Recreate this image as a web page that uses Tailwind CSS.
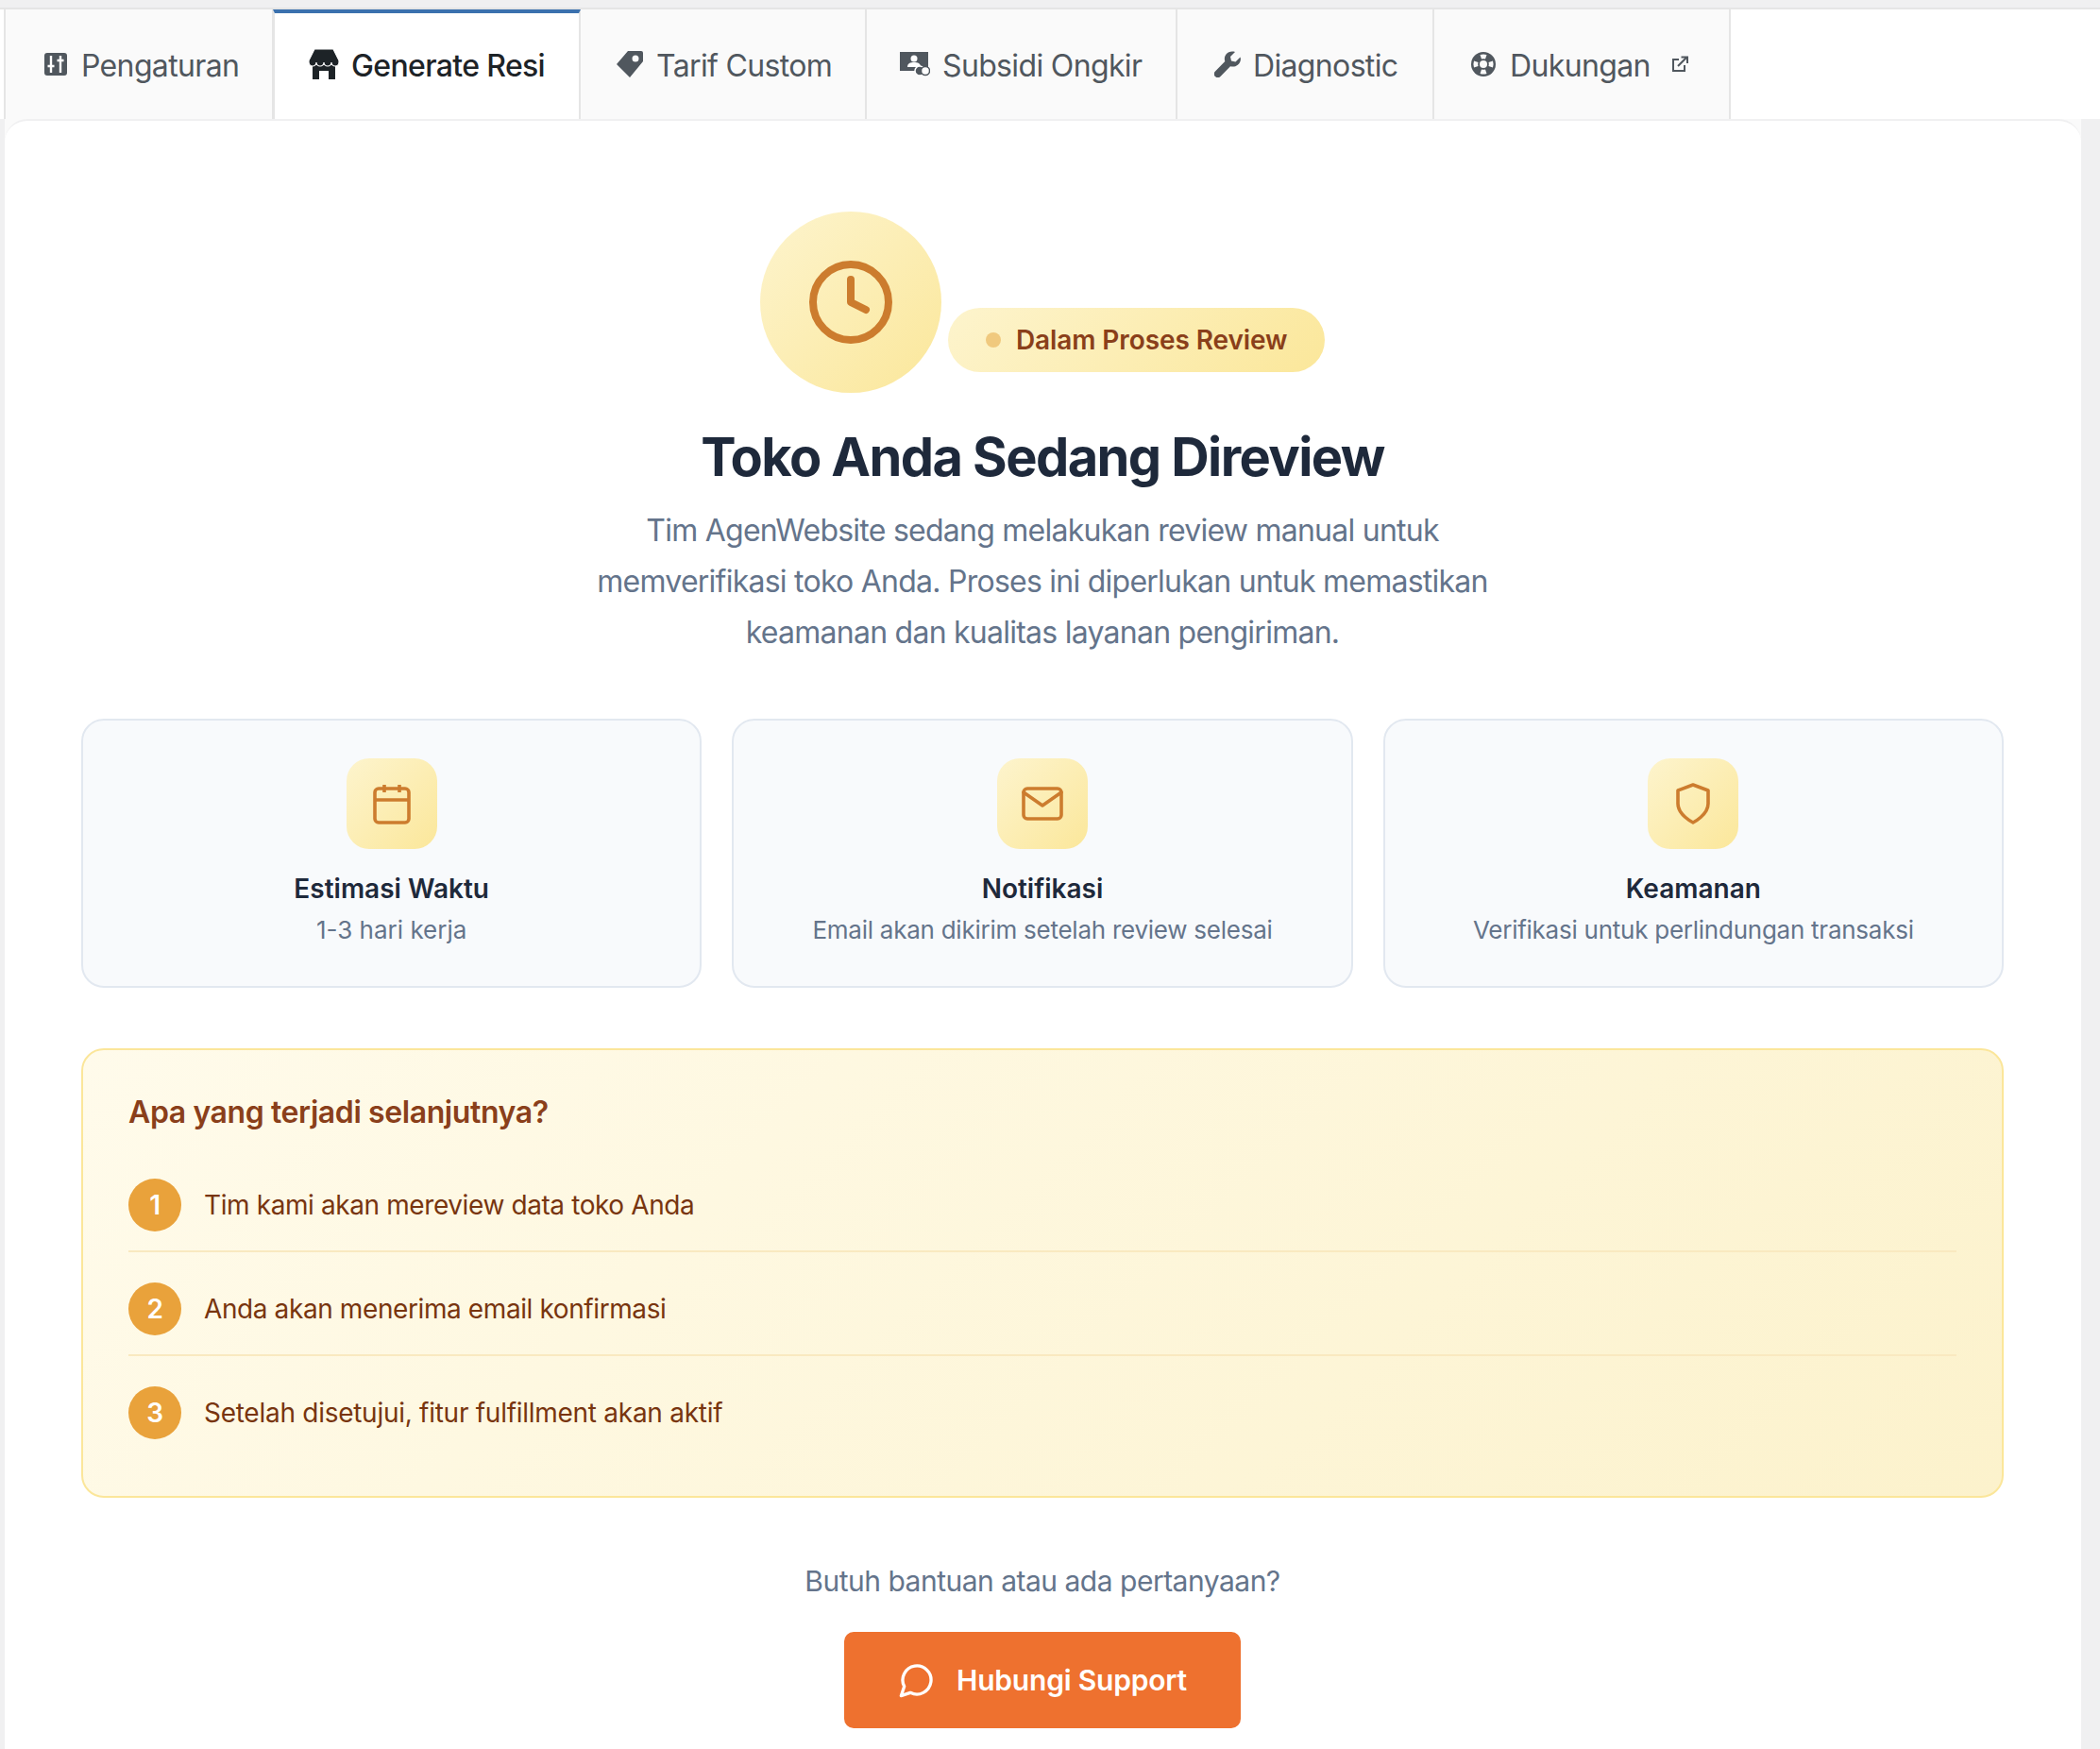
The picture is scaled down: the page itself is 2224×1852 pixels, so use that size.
<!DOCTYPE html>
<html lang="id">
<head>
    <meta charset="UTF-8">
    <title>Generate Resi</title>
    <script src="https://cdn.jsdelivr.net/npm/@tailwindcss/browser@4"></script>
</head>
<body class="bg-[#f0f0f1] font-['Inter',sans-serif] h-[1852px] overflow-hidden pt-2">
    <!-- Tabs -->
    <nav class="h-[118px] flex bg-white border-t-2 border-[#e5e5e5] pl-1 text-[32px] tracking-[-0.65px] text-[#50575e]">
        <a class="w-[286px] pl-[41px] flex items-center gap-[15px] bg-[#fafafa] border-x-2 border-[#e5e5e5]">
            <svg class="w-[24px] h-[24px]" viewBox="0 0 24 24"><rect width="24" height="24" rx="3" fill="#50575e"/><path d="M7 3v18M17 3v18M3.500 14h7M13.500 8h7" stroke="#fff" stroke-width="2.400" fill="none"/></svg>
            <span class="pt-[3px]">Pengaturan</span>
        </a>
        <a class="w-[326px] -ml-[1px] pl-[36px] flex items-center gap-[13px] bg-white border-x-2 border-[#e5e5e5] border-t-4 border-t-[#3b71ae] font-medium text-[#1d2327] pb-1">
            <svg class="w-[32px] h-[32px]" viewBox="0 0 32 32" fill="#1d2327"><path d="M4 17h24v15h-7v-9h-10v9h-7z"/><path stroke="#fff" stroke-width="1.200" d="M6 0h20l6 12v2a4 4 0 0 1-8 0 4 4 0 0 1-8 0 4 4 0 0 1-8 0 4 4 0 0 1-8 0v-2z"/></svg>
            <span class="pt-[3px]">Generate Resi</span>
        </a>
        <a class="w-[303px] pl-[38px] flex items-center gap-[14px] bg-[#fafafa] border-r-2 border-[#e5e5e5]">
            <svg class="w-[28px] h-[28px]" viewBox="0 0 28 28"><path fill-rule="evenodd" fill="#50575e" d="M12 0h14a2 2 0 0 1 2 2v9L14 28 0 14zM20 4.500a3.500 3.500 0 1 0 0 7 3.500 3.500 0 0 0 0-7z"/></svg>
            <span class="pt-[3px]">Tarif Custom</span>
        </a>
        <a class="w-[329px] pl-[35px] flex items-center gap-[13px] bg-[#fafafa] border-r-2 border-[#e5e5e5]">
            <svg class="w-[32px] h-[26px]" viewBox="0 0 32 26"><path fill="#50575e" d="M0 0h30v20h-30z"/><circle cx="15" cy="7" r="3.500" fill="#fff"/><path fill="#fff" d="M8 16c0-4 3-5 7-5s7 1 7 5z"/><circle cx="21" cy="20" r="5" fill="#50575e" stroke="#fff" stroke-width="1.500"/><circle cx="27" cy="20" r="4.500" fill="#fff" stroke="#50575e" stroke-width="1.500"/></svg>
            <span class="pt-[3px]">Subsidi Ongkir</span>
        </a>
        <a class="w-[272px] pl-[39px] flex items-center gap-[13px] bg-[#fafafa] border-r-2 border-[#e5e5e5]">
            <svg class="w-[28px] h-[28px]" viewBox="0 0 28 28"><path fill="#50575e" d="M27.500 6.500l-5 5-4.500-1-1-4.500 5-5c-3.500-1.200-7.500-.2-9.500 2.500-1.800 2.300-2 5-1.200 7.500L1 21.500a3.800 3.800 0 0 0 5.500 5.500l10.500-10.800c2.500.8 5.500.5 7.800-1.400 2.700-2.300 3.800-5.300 2.700-8.300z"/></svg>
            <span class="pt-[3px]">Diagnostic</span>
        </a>
        <a class="w-[314px] pl-[39px] flex items-center bg-[#fafafa] border-r-2 border-[#e5e5e5]">
            <svg class="w-[26px] h-[26px]" viewBox="0 0 26 26"><circle cx="13" cy="13" r="13" fill="#50575e"/><circle cx="13" cy="13" r="4" fill="#fafafa"/><path fill="#fafafa" d="M9.500 3a11 11 0 0 1 7 0l-1.500 4.500a6 6 0 0 0-4 0zM9.500 23a11 11 0 0 0 7 0l-1.500-4.500a6 6 0 0 1-4 0zM3 9.500a11 11 0 0 0 0 7l4.500-1.500a6 6 0 0 1 0-4zM23 9.500a11 11 0 0 1 0 7l-4.500-1.500a6 6 0 0 0 0-4z"/></svg>
            <span class="ml-[15px] pt-[3px]">Dukungan</span>
            <svg class="w-[18px] h-[18px] ml-[22px]" viewBox="0 0 18 18" fill="none" stroke="#50575e" stroke-width="2"><path d="M8 4H2v12h12v-6M7 11L16 2M10.500 1.500h6.500v6.500"/></svg>
        </a>
    </nav>

    <div class="ml-[5px] w-[2199px] bg-[#fafafa] h-[1726px]">
        <main class="h-full bg-white rounded-t-[24px] border-t-2 border-[#f0f0f1] pl-[81px] pr-[82px] pt-[96px]">
            <!-- Status -->
            <div class="flex justify-center items-end gap-[7px]">
                <div class="w-[192px] h-[192px] rounded-full bg-linear-135 from-[#fdf4cd] to-[#fbe79a] flex items-center justify-center">
                    <svg class="w-[96px] h-[96px]" viewBox="0 0 24 24" fill="none" stroke="#cc7c2e" stroke-width="2" stroke-linecap="round" stroke-linejoin="round"><circle cx="12" cy="12" r="10"/><path d="M12 6v6l4 2"/></svg>
                </div>
                <div class="mb-[22px] h-[68px] w-[399px] rounded-full bg-linear-135 from-[#fdf4cd] to-[#fbe79a] pl-[40px] flex items-center gap-[16px] text-[28px] tracking-[-0.1px] font-semibold text-[#8a3f1a]">
                    <span class="w-[16px] h-[16px] rounded-full bg-[#f0c97e]"></span>
                    <span>Dalam Proses Review</span>
                </div>
            </div>

            <h1 class="mt-[32px] text-center text-[56px] leading-[72px] font-bold text-[#1e293b] tracking-[-1.6px]">Toko Anda Sedang Direview</h1>
            <p class="mt-[15px] mx-auto w-[960px] text-center text-[32px] leading-[54px] tracking-[-0.75px] text-[#64748b]">Tim AgenWebsite sedang melakukan review manual untuk memverifikasi toko Anda. Proses ini diperlukan untuk memastikan keamanan dan kualitas layanan pengiriman.</p>

            <!-- Info cards -->
            <div class="mt-[64px] grid grid-cols-3 gap-[32px]">
                <div class="h-[285px] rounded-[24px] border-2 border-[#e2e8f0] bg-[#f8fafc] pt-[40px] flex flex-col items-center">
                    <div class="w-[96px] h-[96px] rounded-[24px] bg-linear-135 from-[#fdf4cd] to-[#fbe79a] flex items-center justify-center">
                        <svg class="w-[48px] h-[48px]" viewBox="0 0 24 24" fill="none" stroke="#cc7c2e" stroke-width="1.800"><rect x="3" y="4" width="18" height="18" rx="2"/><path d="M16 2v4M8 2v4M3 10h18"/></svg>
                    </div>
                    <div class="mt-[24px] text-[28px] leading-[36px] font-semibold text-[#1e293b]">Estimasi Waktu</div>
                    <div class="mt-[8px] text-[26px] leading-[36px] text-[#64748b]">1-3 hari kerja</div>
                </div>
                <div class="h-[285px] rounded-[24px] border-2 border-[#e2e8f0] bg-[#f8fafc] pt-[40px] flex flex-col items-center">
                    <div class="w-[96px] h-[96px] rounded-[24px] bg-linear-135 from-[#fdf4cd] to-[#fbe79a] flex items-center justify-center">
                        <svg class="w-[48px] h-[48px]" viewBox="0 0 24 24" fill="none" stroke="#cc7c2e" stroke-width="1.800" stroke-linecap="round" stroke-linejoin="round"><path d="M4 4h16c1.100 0 2 .9 2 2v12c0 1.100-.9 2-2 2H4c-1.100 0-2-.9-2-2V6c0-1.100.9-2 2-2z"/><path d="M22 6l-10 7L2 6"/></svg>
                    </div>
                    <div class="mt-[24px] text-[28px] leading-[36px] font-semibold text-[#1e293b]">Notifikasi</div>
                    <div class="mt-[8px] text-[26px] leading-[36px] tracking-[-0.25px] text-[#64748b]">Email akan dikirim setelah review selesai</div>
                </div>
                <div class="h-[285px] rounded-[24px] border-2 border-[#e2e8f0] bg-[#f8fafc] pt-[40px] flex flex-col items-center">
                    <div class="w-[96px] h-[96px] rounded-[24px] bg-linear-135 from-[#fdf4cd] to-[#fbe79a] flex items-center justify-center">
                        <svg class="w-[48px] h-[48px]" viewBox="0 0 24 24" fill="none" stroke="#cc7c2e" stroke-width="1.800" stroke-linecap="round" stroke-linejoin="round"><path d="M12 22s8-4 8-10V5l-8-3-8 3v7c0 6 8 10 8 10z"/></svg>
                    </div>
                    <div class="mt-[24px] text-[28px] leading-[36px] font-semibold text-[#1e293b]">Keamanan</div>
                    <div class="mt-[8px] text-[26px] leading-[36px] tracking-[-0.25px] text-[#64748b]">Verifikasi untuk perlindungan transaksi</div>
                </div>
            </div>

            <!-- Next steps -->
            <section class="mt-[64px] h-[476px] rounded-[24px] border-2 border-[#fbe69a] bg-linear-135 from-[#fffbeb] to-[#fcf2cc] px-[48px] pt-[46px]">
                <h3 class="text-[32px] leading-[40px] tracking-[-0.4px] font-semibold text-[#8a3f1a]">Apa yang terjadi selanjutnya?</h3>
                <ul class="mt-[30px] text-[28px] tracking-[-0.4px] text-[#78350f]">
                    <li class="flex items-center gap-[24px] pt-[20px] pb-[20px] border-b-2 border-[#f9e9c0]">
                        <span class="w-[56px] h-[56px] rounded-full bg-[#e9a23b] text-white font-semibold flex items-center justify-center">1</span>
                        <span>Tim kami akan mereview data toko Anda</span>
                    </li>
                    <li class="flex items-center gap-[24px] pt-[32px] pb-[20px] border-b-2 border-[#f9e9c0]">
                        <span class="w-[56px] h-[56px] rounded-full bg-[#e9a23b] text-white font-semibold flex items-center justify-center">2</span>
                        <span>Anda akan menerima email konfirmasi</span>
                    </li>
                    <li class="flex items-center gap-[24px] pt-[32px]">
                        <span class="w-[56px] h-[56px] rounded-full bg-[#e9a23b] text-white font-semibold flex items-center justify-center">3</span>
                        <span class="tracking-[-0.27px]">Setelah disetujui, fitur fulfillment akan aktif</span>
                    </li>
                </ul>
            </section>

            <!-- Support -->
            <p class="mt-[68px] text-center text-[30px] leading-[40px] tracking-[-0.5px] text-[#64748b]">Butuh bantuan atau ada pertanyaan?</p>
            <a class="mt-[34px] mx-auto w-[420px] h-[102px] rounded-[10px] bg-[#ee712f] text-white text-[30px] tracking-[-0.2px] font-semibold flex items-center justify-center gap-[22px]">
                <svg class="w-[40px] h-[40px]" viewBox="0 0 24 24" fill="none" stroke="#fff" stroke-width="2" stroke-linecap="round" stroke-linejoin="round"><path d="M7.900 20A9 9 0 1 0 4 16.100L2 22Z"/></svg>
                <span>Hubungi Support</span>
            </a>
        </main>
    </div>
</body>
</html>
